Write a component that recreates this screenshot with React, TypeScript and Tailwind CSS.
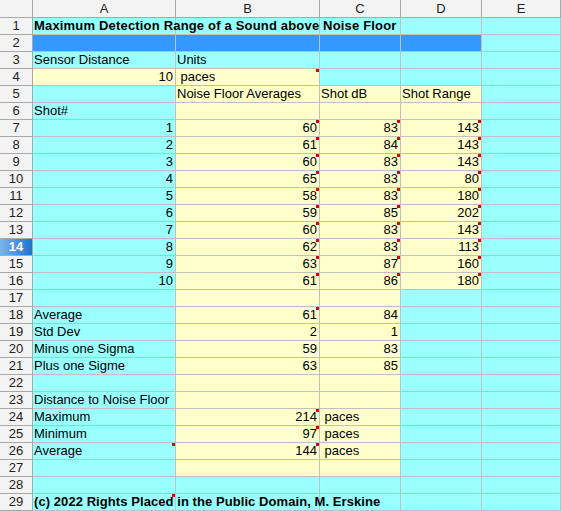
import React from "react";

type Cell = {
  t?: string;
  r?: boolean; // right align
  bg?: "c" | "y" | "b";
  b?: boolean; // bold
  m?: boolean; // comment marker
  o?: boolean; // overflow
  k?: string; // extra classes
};

const C = (t = "", extra: Partial<Cell> = {}): Cell => ({ t, bg: "c", ...extra });
const Y = (t = "", extra: Partial<Cell> = {}): Cell => ({ t, bg: "y", ...extra });

const B7 = [60, 61, 60, 65, 58, 59, 60, 62, 63, 61];
const C7 = [83, 84, 83, 83, 83, 85, 83, 83, 87, 86];
const D7 = [143, 143, 143, 80, 180, 202, 143, 113, 160, 180];

const rows: Cell[][] = [
  [C("Maximum Detection Range of a Sound above Noise Floor", { b: true, o: true, k: " tracking-[0.18px]" }), C(), C(), C(), C()],
  [{ bg: "b" }, { bg: "b" }, { bg: "b" }, { bg: "b" }, C()],
  [C("Sensor Distance"), C("Units"), C(), C(), C()],
  [Y("10", { r: true }), Y("\u00a0paces", { m: true }), C(), C(), C()],
  [C(), Y("Noise Floor Averages"), Y("Shot dB"), Y("Shot Range"), C()],
  [C("Shot#"), Y(), Y(), Y(), C()],
  ...B7.map((v, i) => [
    C(String(i + 1), { r: true }),
    Y(String(v), { r: true, m: true }),
    Y(String(C7[i]), { r: true, m: true }),
    Y(String(D7[i]), { r: true, m: true }),
    C(),
  ]),
  [C(), Y(), Y(), C(), C()],
  [C("Average"), Y("61", { r: true, m: true }), Y("84", { r: true }), C(), C()],
  [C("Std Dev"), Y("2", { r: true }), Y("1", { r: true }), C(), C()],
  [C("Minus one Sigma"), Y("59", { r: true }), Y("83", { r: true }), C(), C()],
  [C("Plus one Sigme"), Y("63", { r: true }), Y("85", { r: true }), C(), C()],
  [C(), Y(), Y(), C(), C()],
  [C("Distance to Noise Floor"), Y(), Y(), C(), C()],
  [C("Maximum"), Y("214", { r: true, m: true }), Y("\u00a0paces"), C(), C()],
  [C("Minimum"), Y("97", { r: true, m: true }), Y("\u00a0paces"), C(), C()],
  [C("Average", { m: true }), Y("144", { r: true, m: true }), Y("\u00a0paces"), C(), C()],
  [C(), Y(), Y(), C(), C()],
  [C(), C(), C(), C(), C()],
  [C("(c) 2022 Rights Placed in the Public Domain, M. Erskine", { b: true, o: true, m: true, k: " tracking-[0.07px]" }), C(), C(), C(), C()],
];

const bgClass = (bg?: string) =>
  bg === "y" ? "bg-[#ffffcc]" : bg === "b" ? "bg-[#3399ff]" : "bg-[#99ffff]";

export default function App() {
  const cols = ["A", "B", "C", "D", "E"];
  return (
    <div
      className="w-[561px] h-[511px] overflow-hidden bg-white text-[13px] text-black"
      style={{ fontFamily: '"Liberation Sans", Arial, sans-serif' }}
    >
      <div className="grid grid-cols-[33px_143px_144px_81px_81px_1fr]">
        {/* header row */}
        <div className="h-[18px] bg-[#f3f3f3] border-r border-b border-[#a8a8a8]" />
        {cols.map((c) => (
          <div
            key={c}
            className="h-[18px] bg-[#f3f3f3] border-r border-b border-[#a8a8a8] flex items-center justify-center text-[#222] leading-[16px]"
          >
            {c}
          </div>
        ))}
        {rows.map((row, ri) => (
          <React.Fragment key={ri}>
            <div
              className={
                "h-[17px] border-r border-b border-[#a8a8a8] flex items-center justify-center leading-[16px] " +
                (ri + 1 === 14
                  ? "bg-linear-to-r from-[#7ab6ec] to-[#1b72cf] text-white font-bold"
                  : "bg-[#f3f3f3] text-[#222]")
              }
            >
              {ri + 1}
            </div>
            {row.map((cell, ci) => (
              <div
                key={ci}
                className={
                  "relative h-[17px] border-r border-b border-[#c0c0c0] leading-[16px] whitespace-nowrap " +
                  bgClass(cell.bg) +
                  (cell.o ? " overflow-visible z-10" : " overflow-hidden") +
                  (cell.r ? " text-right pr-[2px]" : " pl-[1px]") +
                  (cell.b ? " font-bold" : "") +
                  (cell.k ?? "")
                }
              >
                {cell.t}
                {cell.m && (
                  <span className="absolute top-0 right-0 w-[3px] h-[3px] bg-[#e00000]" />
                )}
              </div>
            ))}
          </React.Fragment>
        ))}
      </div>
    </div>
  );
}
